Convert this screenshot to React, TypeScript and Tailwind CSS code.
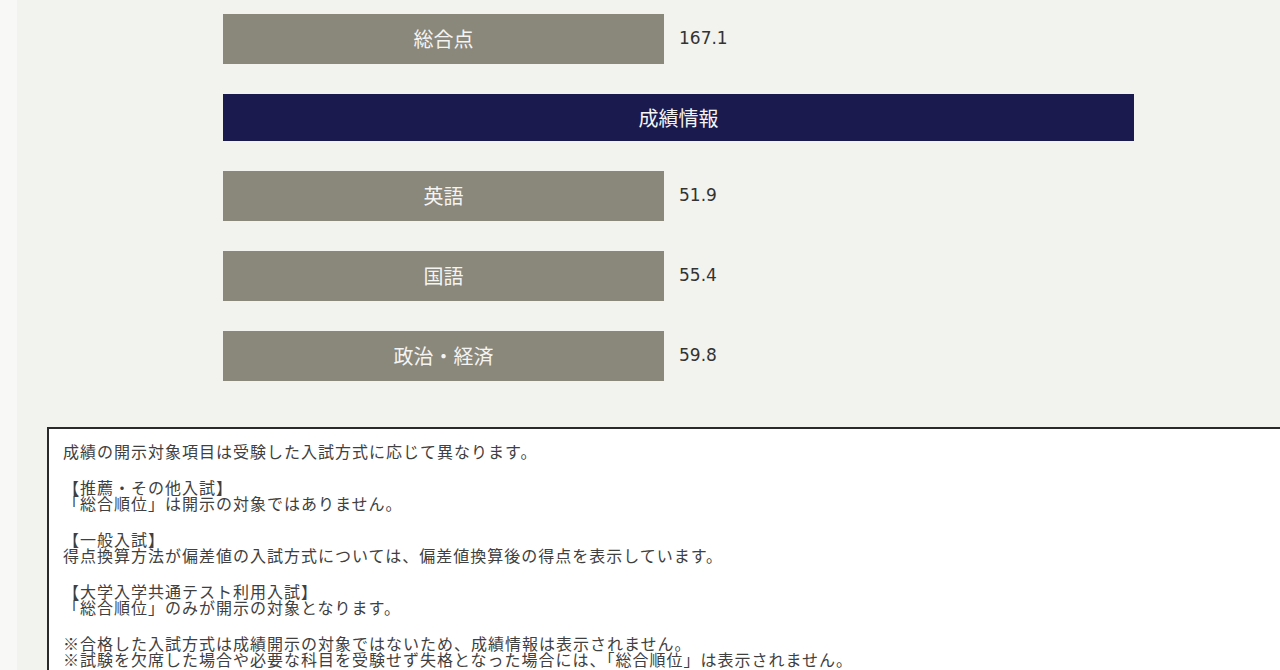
import React from 'react';

type Score = {
  label: string
  value: string
}

const subjects: Score[] = [
  { label: '英語', value: '51.9' },
  { label: '国語', value: '55.4' },
  { label: '政治・経済', value: '59.8' },
];

const jp = { fontFamily: '"Noto Sans CJK JP", "Noto Sans", sans-serif' };
const num = { fontFamily: '"DejaVu Sans", Verdana, sans-serif' };

const ScoreRow: React.FC<Score> = ({ label, value }) => (
  <div className="flex items-center">
    <div
      className="w-[441px] h-[50px] bg-[#8a877b] text-[#f4f4f2] text-[20px] flex items-center justify-center"
      style={jp}
    >
      {label}
    </div>
    <span className="ml-[15px] text-[17px] text-[#333333]" style={num}>
      {value}
    </span>
  </div>
);

const notes: string[][] = [
  ['成績の開示対象項目は受験した入試方式に応じて異なります。'],
  ['【推薦・その他入試】', '「総合順位」は開示の対象ではありません。'],
  ['【一般入試】', '得点換算方法が偏差値の入試方式については、偏差値換算後の得点を表示しています。'],
  ['【大学入学共通テスト利用入試】', '「総合順位」のみが開示の対象となります。'],
  [
    '※合格した入試方式は成績開示の対象ではないため、成績情報は表示されません。',
    '※試験を欠席した場合や必要な科目を受験せず失格となった場合には、「総合順位」は表示されません。',
  ],
];

const App: React.FC = () => {
  return (
    <div className="w-[1280px] h-[670px] overflow-hidden flex bg-[#f2f2ee]">
      {/* narrow page gutter */}
      <div className="w-[17px] shrink-0 bg-[#f8f8f6]" />

      <div className="flex-1 flex flex-col">
        <div className="pl-[206px] pt-[14px] flex flex-col gap-[30px]">
          <ScoreRow label="総合点" value="167.1" />

          <div
            className="w-[911px] h-[47px] bg-[#1b1a4f] text-[#f4f4f2] text-[20px] flex items-center justify-center"
            style={jp}
          >
            成績情報
          </div>

          {subjects.map((s) => (
            <ScoreRow key={s.label} label={s.label} value={s.value} />
          ))}
        </div>

        {/* notes box runs past the right edge of the viewport */}
        <div
          className="mt-[46px] ml-[30px] w-[1260px] shrink-0 flex-1 bg-white border-2 border-[#2a2a2a] pt-[14px] pl-[14px] text-[16px] leading-4 tracking-[1px] text-[#404040]"
          style={jp}
        >
          {notes.map((lines, i) => (
            <div key={i} className="mb-[20px]">
              {lines.map((line) => (
                <div key={line} className="whitespace-nowrap">
                  {line}
                </div>
              ))}
            </div>
          ))}
        </div>
      </div>
    </div>
  );
};

export default App;
